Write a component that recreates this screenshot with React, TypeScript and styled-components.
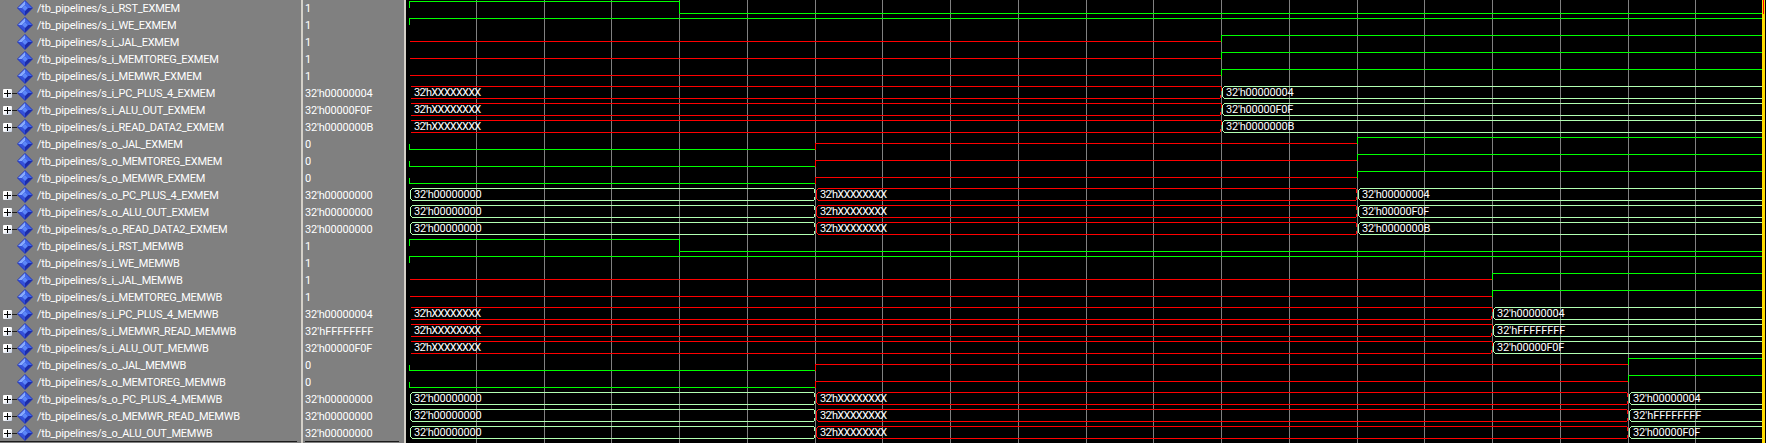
import styled, { createGlobalStyle } from 'styled-components'

const GlobalStyle = createGlobalStyle`
  html, body {
    margin: 0;
    padding: 0;
    background: #000;
  }
`

const ROW = 17
const ORIGIN = 3
const STEP = 67.75
const WAVE_WIDTH = 1360
const WAVE_END = 1356

const GREEN = '#00ff00'
const PALE = '#b2ffb2'
const RED = '#ff0000'

const tick = (k: number) => Math.round(2.2 + STEP * k)

type Level = 'high' | 'low' | 'mid'
type Step = [number, Level]
type BusStep = [number, string]

type Signal = {
  name: string
  value: string
  levels?: Step[]
  bus?: BusStep[]
}

const X = "32'hXXXXXXXX"
const ZERO = "32'h00000000"
const FOUR = "32'h00000004"
const F0F = "32'h00000F0F"
const B = "32'h0000000B"
const FFF = "32'hFFFFFFFF"

const trackingFor = (label: string) => {
  if (label === X) return -0.75
  if (label === FFF) return -0.05
  return -0.2
}

const signals: Signal[] = [
  { name: 's_i_RST_EXMEM', value: '1', levels: [[4, 'high'], [20, 'low']] },
  { name: 's_i_WE_EXMEM', value: '1', levels: [[20, 'high']] },
  { name: 's_i_JAL_EXMEM', value: '1', levels: [[12, 'mid'], [20, 'high']] },
  { name: 's_i_MEMTOREG_EXMEM', value: '1', levels: [[12, 'mid'], [20, 'high']] },
  { name: 's_i_MEMWR_EXMEM', value: '1', levels: [[12, 'mid'], [20, 'high']] },
  { name: 's_i_PC_PLUS_4_EXMEM', value: FOUR, bus: [[12, X], [20, FOUR]] },
  { name: 's_i_ALU_OUT_EXMEM', value: F0F, bus: [[12, X], [20, F0F]] },
  { name: 's_i_READ_DATA2_EXMEM', value: B, bus: [[12, X], [20, B]] },
  { name: 's_o_JAL_EXMEM', value: '0', levels: [[6, 'low'], [14, 'mid'], [20, 'high']] },
  { name: 's_o_MEMTOREG_EXMEM', value: '0', levels: [[6, 'low'], [14, 'mid'], [20, 'high']] },
  { name: 's_o_MEMWR_EXMEM', value: '0', levels: [[6, 'low'], [14, 'mid'], [20, 'high']] },
  { name: 's_o_PC_PLUS_4_EXMEM', value: ZERO, bus: [[6, ZERO], [14, X], [20, FOUR]] },
  { name: 's_o_ALU_OUT_EXMEM', value: ZERO, bus: [[6, ZERO], [14, X], [20, F0F]] },
  { name: 's_o_READ_DATA2_EXMEM', value: ZERO, bus: [[6, ZERO], [14, X], [20, B]] },
  { name: 's_i_RST_MEMWB', value: '1', levels: [[4, 'high'], [20, 'low']] },
  { name: 's_i_WE_MEMWB', value: '1', levels: [[20, 'high']] },
  { name: 's_i_JAL_MEMWB', value: '1', levels: [[16, 'mid'], [20, 'high']] },
  { name: 's_i_MEMTOREG_MEMWB', value: '1', levels: [[16, 'mid'], [20, 'high']] },
  { name: 's_i_PC_PLUS_4_MEMWB', value: FOUR, bus: [[16, X], [20, FOUR]] },
  { name: 's_i_MEMWR_READ_MEMWB', value: FFF, bus: [[16, X], [20, FFF]] },
  { name: 's_i_ALU_OUT_MEMWB', value: F0F, bus: [[16, X], [20, F0F]] },
  { name: 's_o_JAL_MEMWB', value: '0', levels: [[6, 'low'], [18, 'mid'], [20, 'high']] },
  { name: 's_o_MEMTOREG_MEMWB', value: '0', levels: [[6, 'low'], [18, 'mid'], [20, 'high']] },
  { name: 's_o_PC_PLUS_4_MEMWB', value: ZERO, bus: [[6, ZERO], [18, X], [20, FOUR]] },
  { name: 's_o_MEMWR_READ_MEMWB', value: ZERO, bus: [[6, ZERO], [18, X], [20, FFF]] },
  { name: 's_o_ALU_OUT_MEMWB', value: ZERO, bus: [[6, ZERO], [18, X], [20, F0F]] },
]

const Window = styled.div`
  display: flex;
  width: 1766px;
  height: 443px;
  overflow: hidden;
  background: #000;
  font-family: Roboto, "Liberation Sans", sans-serif;
  font-size: 11px;
  color: #fff;
`

const Column = styled.div<{ $width: number }>`
  flex: none;
  width: ${props => props.$width}px;
  background: #808080;
`

const Splitter = styled.div`
  flex: none;
  width: 2px;
  background: #d4d0c8;
`

const Row = styled.div<{ $pad: number; $spacing: number }>`
  display: flex;
  align-items: center;
  height: ${ROW}px;
  padding-left: ${props => props.$pad}px;
  padding-bottom: 1px;
  box-sizing: border-box;
  white-space: nowrap;
  letter-spacing: ${props => props.$spacing}px;
`

const Twisty = styled.div<{ $shown: boolean }>`
  flex: none;
  position: relative;
  box-sizing: border-box;
  width: 9px;
  height: 9px;
  visibility: ${props => (props.$shown ? 'visible' : 'hidden')};
  background: linear-gradient(135deg, #ffffff 40%, #c6d0e4);
  border-radius: 1px;

  &::before {
    content: '';
    position: absolute;
    left: 1px;
    top: 4px;
    width: 7px;
    height: 1px;
    background: #000;
  }

  &::after {
    content: '';
    position: absolute;
    left: 4px;
    top: 1px;
    width: 1px;
    height: 7px;
    background: #000;
  }
`

const TreeDash = styled.div<{ $shown: boolean }>`
  flex: none;
  width: 5px;
  height: 1px;
  background: ${props => (props.$shown ? '#202020' : 'transparent')};
`

const Icon = styled.svg`
  flex: none;
  width: 16px;
  height: 16px;
  margin-right: 4px;
`

const BottomRule = styled.div<{ $left: number; $right: number }>`
  height: 1px;
  margin: -1px ${props => props.$right}px 0 ${props => props.$left}px;
  background: #1c1c1c;
`

const WavePanel = styled.div`
  flex: 1;
  position: relative;
`

const Plot = styled.svg`
  display: block;
  width: ${WAVE_WIDTH}px;
  height: 443px;
  shape-rendering: crispEdges;
`

const GridLine = styled.line`
  stroke: #808080;
  stroke-width: 1;
`

const Trace = styled.path<{ $color: string }>`
  fill: none;
  stroke: ${props => props.$color};
  stroke-width: 1;
`

const BusLabel = styled.text<{ $spacing: number }>`
  fill: #fff;
  font-family: Roboto, "Liberation Sans", sans-serif;
  font-size: 11px;
  letter-spacing: ${props => props.$spacing}px;
  shape-rendering: auto;
`

const Cursor = styled.div`
  position: absolute;
  top: 0;
  right: 1px;
  bottom: 0;
  width: 3px;
  background: #ffdc00;

  &::before {
    content: '';
    position: absolute;
    left: 1px;
    top: 0;
    width: 1px;
    height: 14px;
    background: #ff0000;
  }
`

const Diamond = () => (
  <Icon viewBox="0 0 16 16">
    <polygon points="8,0 16,8 8,16 0,8" fill="#2436b8" />
    <polygon points="8,1 8,5 5,8 1,8" fill="#86aaff" />
    <polygon points="8,1 15,8 11,8 8,5" fill="#4168ea" />
    <polygon points="1,8 5,8 8,11 8,15" fill="#3450d8" />
    <polygon points="15,8 11,8 8,11 8,15" fill="#1c2ca8" />
    <polygon points="8,5 11,8 8,11 5,8" fill="#5c86f8" />
  </Icon>
)

const levelY = (row: number, level: Level) => {
  const top = row * ROW
  if (level === 'high') return top + 1.5
  if (level === 'low') return top + 13.5
  return top + 7.5
}

const LevelTrace = ({ row, steps }: { row: number; steps: Step[] }) => {
  let start = ORIGIN
  let prevY = levelY(row, 'mid')
  return (
    <>
      {steps.map(([end, level], i) => {
        const y = levelY(row, level)
        const x1 = end >= 20 ? WAVE_END : tick(end)
        const d = `M${start + 0.5} ${prevY}V${y}H${x1 + 0.5}`
        start = x1
        prevY = y
        return <Trace key={i} d={d} $color={level === 'mid' ? RED : GREEN} />
      })}
    </>
  )
}

const BusTrace = ({ row, steps }: { row: number; steps: BusStep[] }) => {
  const top = row * ROW + 1.5
  const bottom = row * ROW + 13.5
  let start = ORIGIN
  return (
    <>
      {steps.map(([end, label], i) => {
        const unknown = label === X
        const last = end >= 20
        const x0 = start + 1.5
        const x1 = last ? WAVE_END + 0.5 : tick(end) - 0.5
        const head = i === 0 && unknown
          ? `M${x0} ${top}H${x1}`
          : `M${x0 + 2} ${top}H${x1 - (last ? 0 : 1)}`
        const tail = last ? '' : `l1 1v3M${x1} ${bottom - 4}v3l-1 1`
        const foot = i === 0 && unknown
          ? `M${x1 - (last ? 0 : 1)} ${bottom}H${x0}`
          : `M${x1 - (last ? 0 : 1)} ${bottom}H${x0 + 2}l-2 -2V${top + 2}l2 -2`
        const labelX = start + 5
        start = tick(end)
        return (
          <g key={i}>
            <Trace d={head + tail + foot} $color={unknown ? RED : PALE} />
            <BusLabel x={labelX} y={row * ROW + 11} $spacing={trackingFor(label)}>{label}</BusLabel>
          </g>
        )
      })}
    </>
  )
}

const App = () => {
  const gridTicks = Array.from({ length: 19 }, (_, i) => tick(i + 1))
  return (
    <Window>
      <GlobalStyle />
      <Column $width={301}>
        {signals.map(signal => {
          const isBus = Boolean(signal.bus)
          return (
            <Row key={signal.name} $pad={3} $spacing={-0.24}>
              <Twisty $shown={isBus} />
              <TreeDash $shown={isBus} />
              <Diamond />
              <span>/tb_pipelines/{signal.name}</span>
            </Row>
          )
        })}
        <BottomRule $left={0} $right={4} />
      </Column>
      <Splitter />
      <Column $width={101}>
        {signals.map(signal => (
          <Row key={signal.name} $pad={2} $spacing={trackingFor(signal.value)}>{signal.value}</Row>
        ))}
        <BottomRule $left={2} $right={5} />
      </Column>
      <Splitter />
      <WavePanel>
        <Plot viewBox={`0 0 ${WAVE_WIDTH} 443`}>
          {gridTicks.map(x => (
            <GridLine key={x} x1={x + 0.5} x2={x + 0.5} y1={0} y2={443} />
          ))}
          {signals.map((signal, row) =>
            signal.bus
              ? <BusTrace key={signal.name} row={row} steps={signal.bus} />
              : <LevelTrace key={signal.name} row={row} steps={signal.levels ?? []} />,
          )}
        </Plot>
        <Cursor />
      </WavePanel>
    </Window>
  )
}

export default App
